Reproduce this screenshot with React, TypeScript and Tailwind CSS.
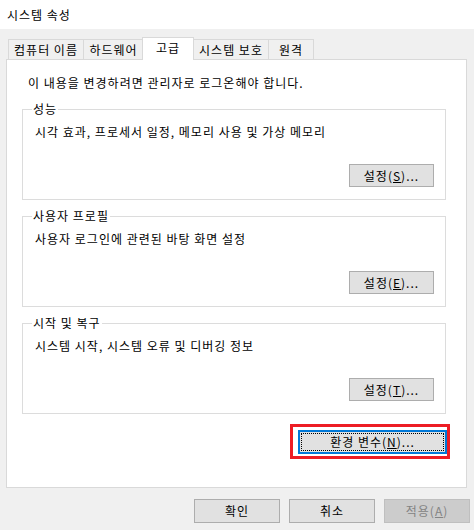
import { ReactNode } from "react";

const font = { fontFamily: '"Noto Sans CJK KR", "Noto Sans", sans-serif' };

const Button = ({
  children,
  className = "",
}: {
  children: ReactNode;
  className?: string;
}) => (
  <button
    className={`flex items-center justify-center border border-[#adadad] bg-[#e1e1e1] text-[12px] leading-none tracking-[1px] text-black ${className}`}
  >
    {children}
  </button>
);

const Group = ({ label, text, mnemonic }: { label: string; text: string; mnemonic: string }) => (
  <div className="relative ml-[15px] flex h-[91px] w-[424px] flex-col border border-[#dcdcdc] pt-[14px] pr-[11px] pb-[12px] pl-[12px]">
    <span className="absolute -top-[9px] left-[9px] bg-white px-[1px] leading-[16px]">{label}</span>
    <p className="leading-[16px]">{text}</p>
    <Button className="mt-auto ml-auto h-[23px] w-[85px]">
      설정(<span className="underline underline-offset-1">{mnemonic}</span>)...
    </Button>
  </div>
);

const tabs = [
  { name: "컴퓨터 이름", w: "w-[76px]" },
  { name: "하드웨어", w: "w-[61px] -ml-px" },
];
const tabsAfter = [
  { name: "시스템 보호", w: "w-[76px] -ml-px" },
  { name: "원격", w: "w-[46px] -ml-px" },
];

const Tab = ({ name, w }: { name: string; w: string }) => (
  <div
    className={`mb-px flex h-[20px] items-center justify-center border border-b-0 border-[#d9d9d9] bg-[#f0f0f0] leading-[16px] ${w}`}
  >
    {name}
  </div>
);

export default function App() {
  return (
    <div style={font} className="flex h-[530px] w-[474px] flex-col bg-[#f0f0f0] text-[12px] tracking-[1px] text-black">
      <div className="flex h-[29px] items-center bg-white pl-[7px] leading-[16px]">시스템 속성</div>

      <div className="mt-[8px] -mb-px flex h-[23px] items-end pl-[8px]">
        {tabs.map((t) => (
          <Tab key={t.name} {...t} />
        ))}
        <div className="relative z-10 -ml-[2px] flex h-[23px] w-[52px] items-start justify-center border border-b-0 border-[#d9d9d9] bg-white pt-[2px] leading-[16px]">
          고급
        </div>
        {tabsAfter.map((t) => (
          <Tab key={t.name} {...t} />
        ))}
      </div>

      <div className="ml-[6px] flex h-[429px] w-[461px] flex-col border border-[#d9d9d9] bg-white">
        <p className="mt-[15px] pl-[21px] leading-[16px]">이 내용을 변경하려면 관리자로 로그온해야 합니다.</p>

        <div className="mt-[18px] flex flex-col gap-[16px]">
          <Group label="성능" text="시각 효과, 프로세서 일정, 메모리 사용 및 가상 메모리" mnemonic="S" />
          <Group label="사용자 프로필" text="사용자 로그인에 관련된 바탕 화면 설정" mnemonic="E" />
          <Group label="시작 및 복구" text="시스템 시작, 시스템 오류 및 디버깅 정보" mnemonic="T" />
        </div>

        <div className="mt-[16px] flex justify-end pr-[19px]">
          <div className="relative">
            <button className="relative flex h-[24px] w-[149px] items-center justify-center border-2 border-[#0078d7] bg-[#e1e1e1] text-[12px] leading-none tracking-[1px] text-black">
              <span className="absolute inset-[1px] border border-dotted border-black" />
              <span className="relative">
                환경 변수(<span className="underline underline-offset-1">N</span>)...
              </span>
            </button>
            <div className="pointer-events-none absolute -top-[6px] -right-[3px] -bottom-[5px] -left-[8px] border-[3px] border-[#ed1c24]" />
          </div>
        </div>
      </div>

      <div className="mt-[11px] flex justify-end gap-[9px] pr-[4px]">
        <Button className="h-[24px] w-[86px]">확인</Button>
        <Button className="h-[24px] w-[86px]">취소</Button>
        <button className="flex h-[24px] w-[86px] items-center justify-center border border-[#bfbfbf] bg-[#cccccc] text-[12px] leading-none tracking-[1px] text-[#838383]">
          적용(<span className="underline underline-offset-1">A</span>)
        </button>
      </div>
    </div>
  );
}
